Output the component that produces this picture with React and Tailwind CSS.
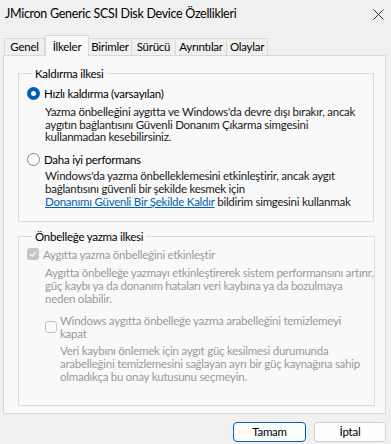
import React from "react";

const tabs = [
  { label: "Genel", w: "w-[41px]" },
  { label: "İlkeler", w: "w-[44px]", active: true },
  { label: "Birimler", w: "w-[44px]" },
  { label: "Sürücü", w: "w-[45px]" },
  { label: "Ayrıntılar", w: "w-[52px]" },
  { label: "Olaylar", w: "w-[42px]" },
];

function Radio({ checked }) {
  return checked ? (
    <span className="flex h-[13px] w-[13px] shrink-0 items-center justify-center rounded-full bg-[#005fb8]">
      <span className="h-[5px] w-[5px] rounded-full bg-white" />
    </span>
  ) : (
    <span className="h-[13px] w-[13px] shrink-0 rounded-full border border-[#858585] bg-[#fbfbfb]" />
  );
}

export default function App() {
  return (
    <div className="flex h-[444px] w-[391px] flex-col overflow-hidden whitespace-nowrap bg-[#f0f0f0] font-['Lato','Liberation_Sans',sans-serif] text-[11.5px] tracking-[-0.25px] text-[#1a1a1a]">
      {/* Title bar */}
      <div className="flex h-[28px] items-center justify-between pl-[5px] pr-[7px]">
        <span className="text-[12.5px] tracking-[-0.3px] text-black">JMicron Generic SCSI Disk Device Özellikleri</span>
        <svg width="11" height="11" viewBox="0 0 11 11" className="text-[#333]">
          <path d="M0.5 0.5 L10.5 10.5 M10.5 0.5 L0.5 10.5" stroke="currentColor" strokeWidth="1" />
        </svg>
      </div>

      {/* Tabs */}
      <div className="mt-[7px] flex h-[20px] items-end pl-[4px]">
        {tabs.map((t, i) =>
          t.active ? (
            <div
              key={t.label}
              className={`relative z-10 -mb-px flex h-[21px] ${t.w} items-start justify-center border border-b-0 border-[#d9d9d9] bg-[#f9f9f9] pt-[2px] text-black`}
            >
              {t.label}
            </div>
          ) : (
            <div
              key={t.label}
              className={`flex h-[17px] ${t.w} items-center justify-center border border-b-0 border-[#dadada] bg-[#f0f0f0] ${i > 0 ? "-ml-px" : ""} text-black`}
            >
              {t.label}
            </div>
          )
        )}
      </div>

      {/* Panel */}
      <div className="ml-[3px] flex h-[359px] w-[383px] flex-col border border-[#d9d9d9] bg-[#f9f9f9] pl-[14px] pt-[11px]">
        <fieldset className="w-[356px] border border-[#dcdcdc] pb-[13px] pl-[8px]">
          <legend className="ml-[5px] px-[3px] leading-[13px] text-black">Kaldırma ilkesi</legend>
          <div className="mt-[7px] flex items-center gap-[4px] leading-[13px] text-black">
            <Radio checked />
            <span>Hızlı kaldırma (varsayılan)</span>
          </div>
          <p className="mt-[6px] pl-[18px] leading-[12.5px] text-[#1a1a1a]">
            Yazma önbelleğini aygıtta ve Windows'da devre dışı bırakır, ancak
            <br />
            aygıtın bağlantısını Güvenli Donanım Çıkarma simgesini
            <br />
            kullanmadan kesebilirsiniz.
          </p>
          <div className="mt-[9px] flex items-center gap-[4px] leading-[13px] text-black">
            <Radio />
            <span>Daha iyi performans</span>
          </div>
          <p className="mt-[3px] pl-[18px] leading-[13px] text-[#1a1a1a]">
            Windows'da yazma önbelleklemesini etkinleştirir, ancak aygıt
            <br />
            bağlantısını güvenli bir şekilde kesmek için
            <br />
            <span className="text-[#0063b1] underline">Donanımı Güvenli Bir Şekilde Kaldır</span> bildirim simgesini kullanmak
          </p>
        </fieldset>

        <fieldset className="mt-[8px] h-[176px] w-[356px] border border-[#dcdcdc] pl-[8px]">
          <legend className="ml-[5px] px-[3px] leading-[13px] text-black">Önbelleğe yazma ilkesi</legend>
          <div className="mt-[5px] flex items-center gap-[4px] leading-[13px] text-[#9a9a9a]">
            <span className="flex h-[12px] w-[12px] shrink-0 items-center justify-center rounded-[3px] bg-[#c6c6c6]">
              <svg width="8" height="8" viewBox="0 0 8 8">
                <path d="M1 4.2 L3.2 6.2 L7 1.8" stroke="white" strokeWidth="1.1" fill="none" />
              </svg>
            </span>
            <span>Aygıtta yazma önbelleğini etkinleştir</span>
          </div>
          <p className="mt-[5px] pl-[18px] leading-[13px] text-[#9a9a9a]">
            Aygıtta önbelleğe yazmayı etkinleştirerek sistem performansını artırır,
            <br />
            güç kaybı ya da donanım hataları veri kaybına ya da bozulmaya
            <br />
            neden olabilir.
          </p>
          <div className="mt-[9px] flex items-center gap-[3px] pl-[18px] leading-[13px] text-[#9a9a9a]">
            <span className="h-[12px] w-[12px] shrink-0 rounded-[3px] border border-[#c4c4c4] bg-[#fbfbfb]" />
            <span>
              Windows aygıtta önbelleğe yazma arabelleğini temizlemeyi
              <br />
              kapat
            </span>
          </div>
          <p className="mt-[4px] pl-[33px] leading-[13px] text-[#9a9a9a]">
            Veri kaybını önlemek için aygıt güç kesilmesi durumunda
            <br />
            arabelleğini temizlemesini sağlayan ayrı bir güç kaynağına sahip
            <br />
            olmadıkça bu onay kutusunu seçmeyin.
          </p>
        </fieldset>
      </div>

      {/* Buttons */}
      <div className="mt-[8px] flex justify-end gap-[8px] pr-[5px]">
        <button className="flex h-[20px] w-[73px] items-center justify-center rounded-[4px] border border-[#005fb8] bg-[#fdfdfd] text-black">
          Tamam
        </button>
        <button className="flex h-[20px] w-[72px] items-center justify-center rounded-[4px] border border-[#d0d0d0] bg-[#fdfdfd] text-black">
          İptal
        </button>
      </div>
    </div>
  );
}
